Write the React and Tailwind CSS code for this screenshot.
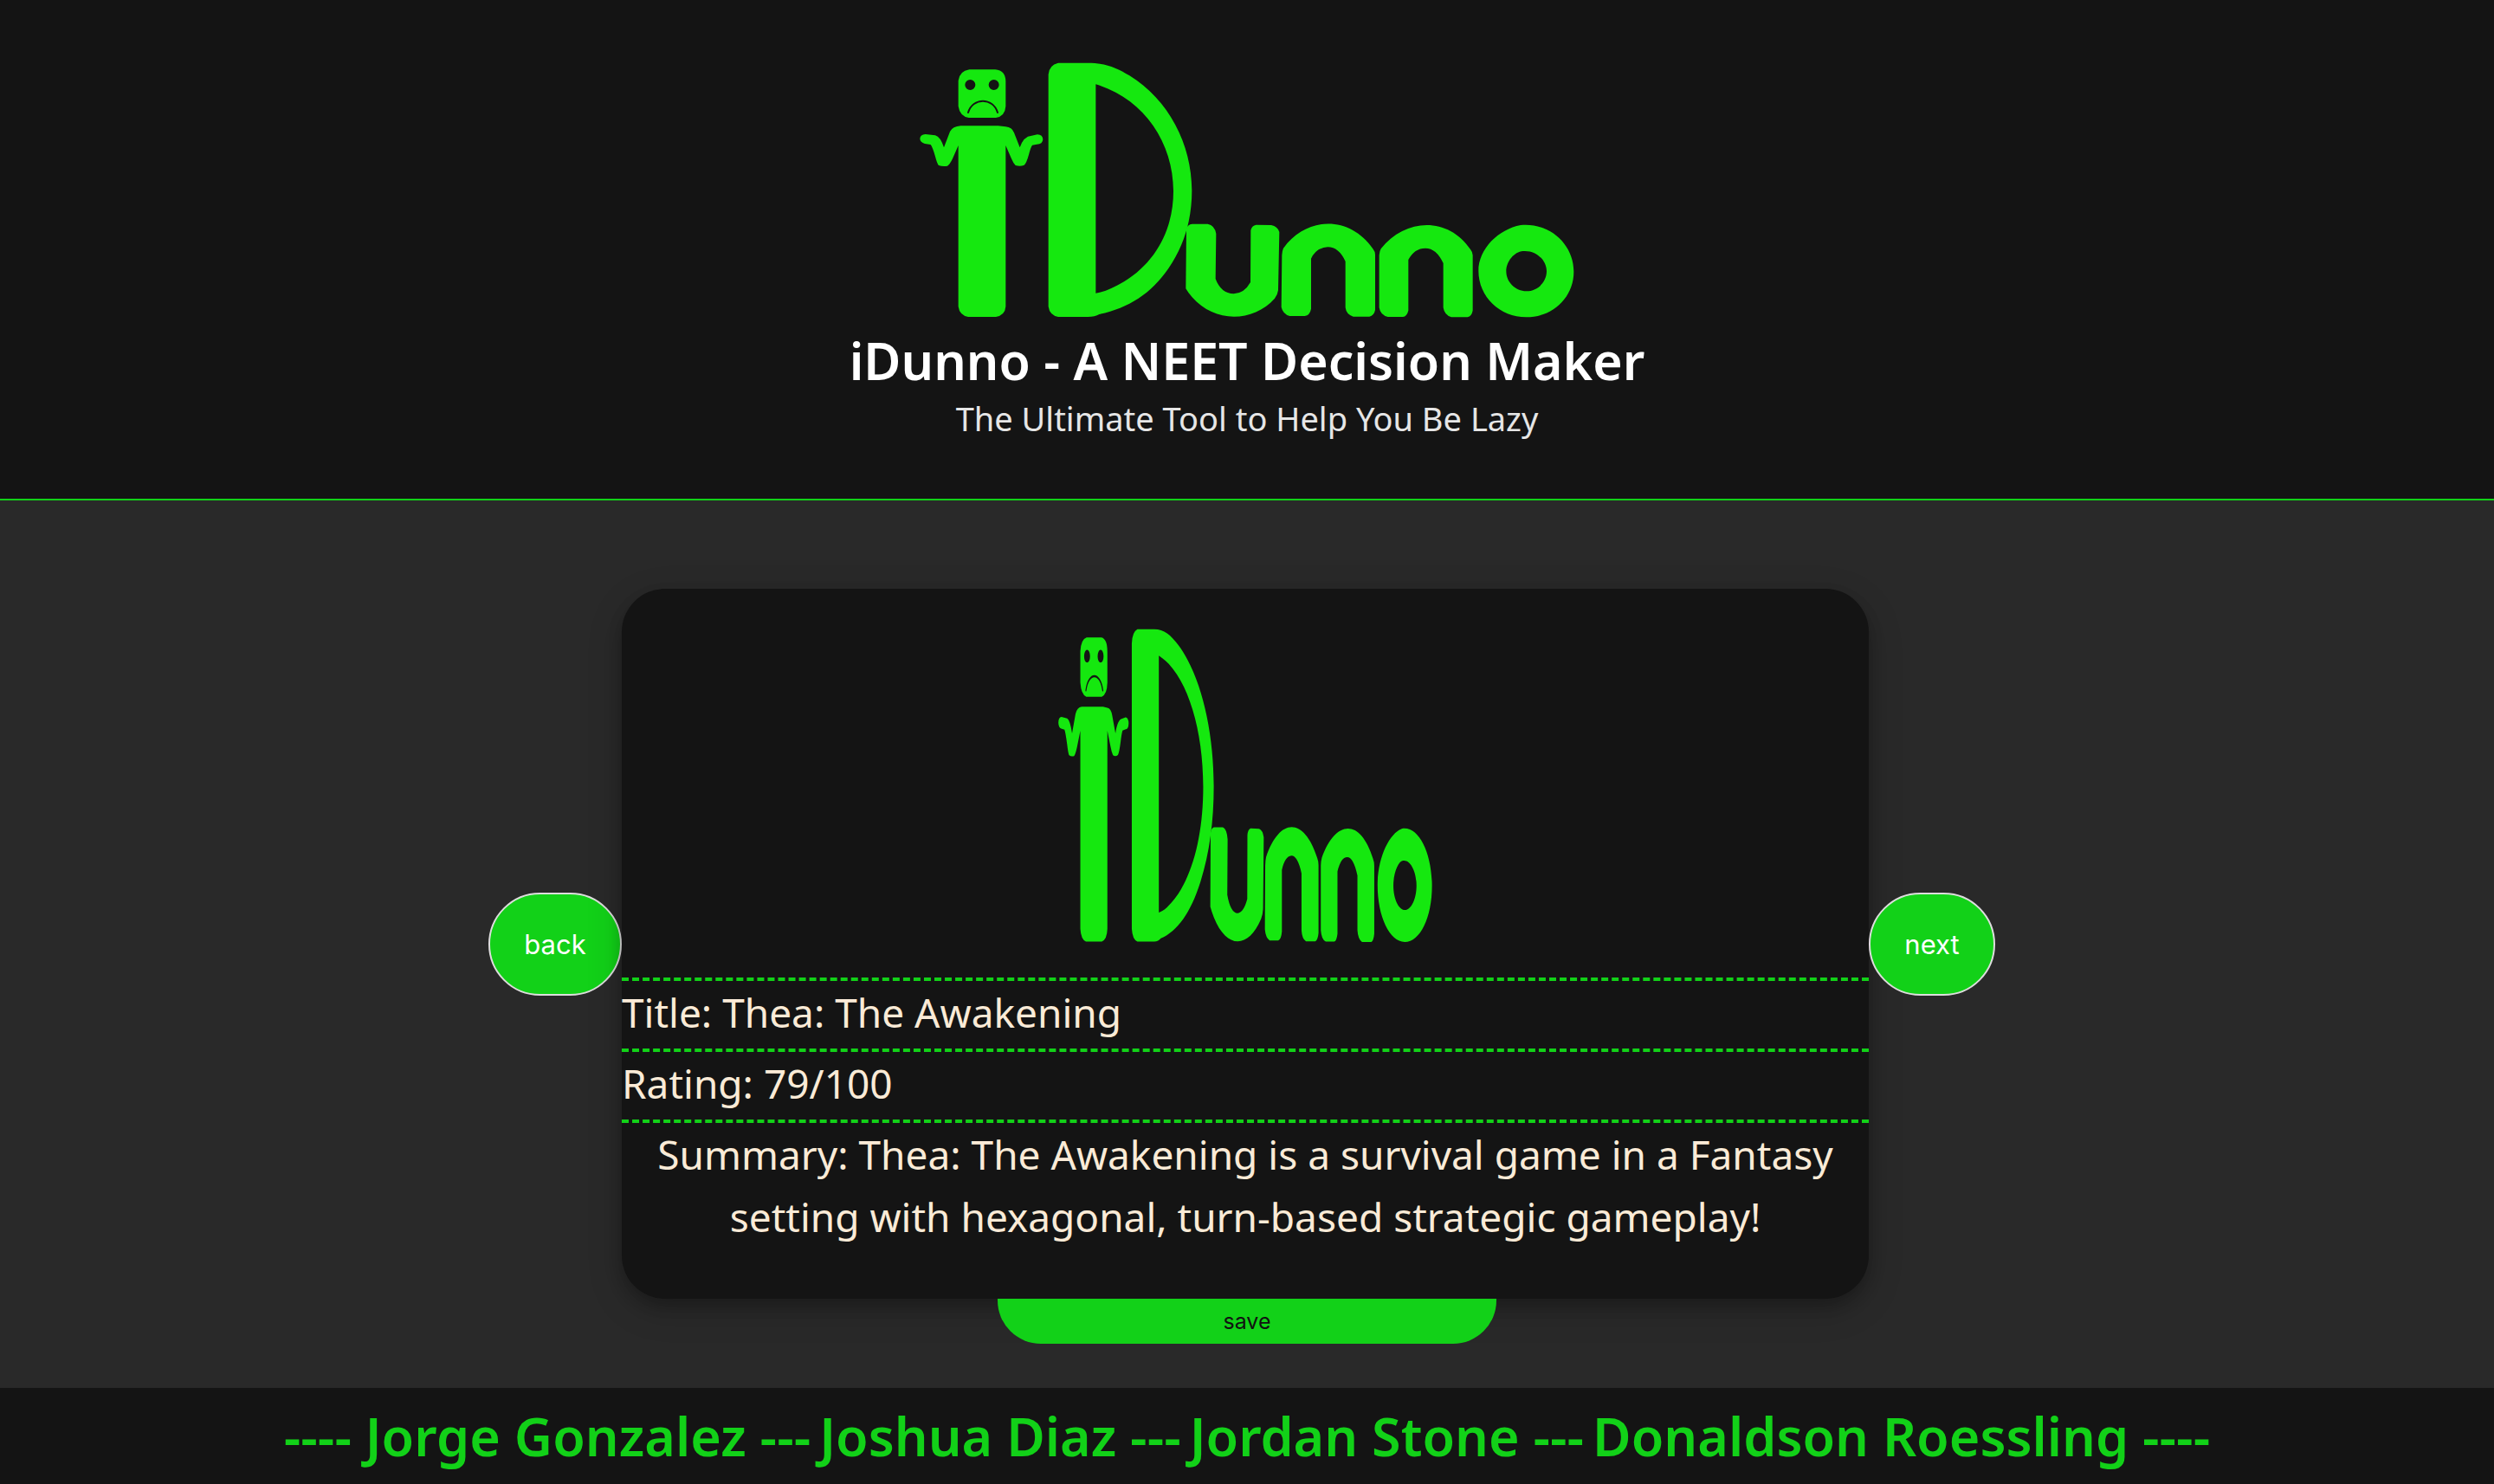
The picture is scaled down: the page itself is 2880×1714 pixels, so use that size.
import React from "react";

function Logo({ className, stretch }) {
  return (
    <svg
      viewBox="68 66 2268 888"
      preserveAspectRatio={stretch ? "none" : "xMidYMid meet"}
      className={className}
      fill="#15e80f"
      role="img"
      aria-label="iDunno"
    >
      {/* head with eyes and frown */}
      <path
        fillRule="evenodd"
        d="M240 91H330Q366 95 366 132V218Q364 252 332 258H238Q207 252 202 218V130Q206 96 240 91Z
           M243 126A18 18 0 1 0 243 162A18 18 0 1 0 243 126Z
           M325 126A18 18 0 1 0 325 162A18 18 0 1 0 325 126Z"
      />
      <path d="M236 240C252 187 322 187 338 240" fill="none" stroke="#141414" strokeWidth="6" strokeLinecap="round" />
      {/* body and shrugging arms */}
      <path
        d="M210 286H340L366 289Q388 291 395 310L415 361Q428 322 456 320L476 316Q494 317 495 333Q494 350 474 350L458 353
           Q452 362 446 386Q438 415 430 422Q416 428 400 423Q392 415 386 400L366 354V912Q364 942 332 948H236Q206 942 202 912V354
           L182 400Q172 421 164 425Q148 428 134 423Q128 416 122 392Q112 358 106 351L86 348Q70 344 69 331Q70 316 88 315
           L122 319Q140 324 152 361L173 306Q182 288 210 286Z"
      />
      {/* D */}
      <path
        fillRule="evenodd"
        d="M548 68H650C710 68 750 84 795 112C930 195 1011 350 1011 510C1011 610 985 700 930 780C870 868 790 918 690 939
           Q676 948 650 948H548Q518 942 514 912V108Q516 76 548 68Z
           M678 142V866C710 862 742 846 776 826C890 756 947 640 947 512C947 340 840 190 678 142Z"
      />
      {/* u */}
      <path
        d="M1012 626H1066Q1090 630 1095 660L1093 816Q1112 867 1156 868Q1193 866 1214 828L1215 648Q1218 632 1234 629L1286 630
           Q1308 634 1314 654L1310 856Q1308 872 1298 884C1222 968 1090 970 1012 880Q998 864 990 850L992 642Q996 628 1012 626Z"
      />
      {/* n */}
      <path
        d="M1328 710C1412 596 1560 598 1638 712Q1646 722 1646 732V924Q1642 944 1626 947H1570Q1546 940 1543 916V756
           Q1520 706 1482 706Q1442 708 1424 746V920Q1420 942 1402 945H1350Q1326 938 1321 914L1323 734Q1324 718 1328 710Z"
      />
      <path
        d="M1666 712C1750 604 1900 600 1976 714Q1984 724 1984 734V926Q1980 946 1966 949H1910Q1886 942 1882 916V762
           Q1858 710 1820 710Q1782 710 1761 750V926Q1756 946 1742 948H1690Q1664 942 1660 916V734Q1661 720 1666 712Z"
      />
      {/* o */}
      <path
        fillRule="evenodd"
        d="M2150 630C2252 620 2334 698 2334 791C2334 880 2262 949 2169 949C2078 949 2004 878 2004 789C2004 712 2074 644 2150 630Z
           M2158 720C2128 722 2100 756 2100 790C2100 828 2132 859 2170 859C2208 859 2240 828 2240 790C2240 752 2204 716 2158 720Z"
      />
    </svg>
  );
}

const pill =
  "shrink-0 rounded-[60px] border-2 border-[#dddddd] bg-[#12d118] px-9 py-10 text-center text-[31px] leading-[35px] text-white font-['Inter',sans-serif]";

const authors = ["---- Jorge Gonzalez ---", "Joshua Diaz ---", "Jordan Stone ---", "Donaldson Roessling ----"];

export default function App() {
  return (
    <div className="min-h-screen bg-[#141414] font-['Noto_Sans',sans-serif]">
      <header className="flex flex-col items-center border-b-2 border-[#12d118] bg-[#141414] px-4 pt-[72px] pb-[62px] text-center">
        <Logo className="h-[296px] w-[756px] max-w-full" />
        <h1 className="mt-3 text-[59px] leading-[72px] font-semibold text-white">iDunno - A NEET Decision Maker</h1>
        <p className="text-[38px] leading-[62px] text-[#e6e6e6]">The Ultimate Tool to Help You Be Lazy</p>
      </header>

      <main className="flex flex-col items-center bg-[#292929] pt-[102px] pb-[51px]">
        <div className="flex w-full items-center justify-center">
          <button type="button" className={`${pill} min-w-[154px]`}>back</button>
          <article className="w-1/2 rounded-[50px] bg-[#141414] pt-[46px] pb-[59px] text-[46px] leading-[72px] text-[#faebd7] shadow-[0_8px_16px_rgba(0,0,0,0.2),0_12px_40px_rgba(0,0,0,0.19)]">
            <Logo stretch className="mx-auto mb-[39px] h-[364px] w-[432px] max-w-full" />
            <p className="border-t-4 border-dashed border-[#12d118] pb-1.5">Title: Thea: The Awakening</p>
            <p className="border-t-4 border-dashed border-[#12d118] pb-1.5">Rating: 79/100</p>
            <p className="border-t-4 border-dashed border-[#12d118] px-8 text-center">
              Summary: Thea: The Awakening is a survival game in a Fantasy setting with hexagonal, turn-based strategic
              gameplay!
            </p>
          </article>
          <button type="button" className={`${pill} mr-3 min-w-[146px]`}>next</button>
        </div>
        <button
          type="button"
          className="z-10 w-1/5 rounded-b-[50px] bg-[#12d118] py-2.5 text-center font-['Inter',sans-serif] text-[25px] leading-8 text-[#111111]"
        >
          save
        </button>
      </main>

      <footer className="flex flex-wrap justify-center gap-x-2.5 bg-[#141414] py-5 text-[61px] leading-[71px] font-semibold text-[#12d118]">
        {authors.map((name) => (
          <span key={name}>{name}</span>
        ))}
      </footer>
    </div>
  );
}
